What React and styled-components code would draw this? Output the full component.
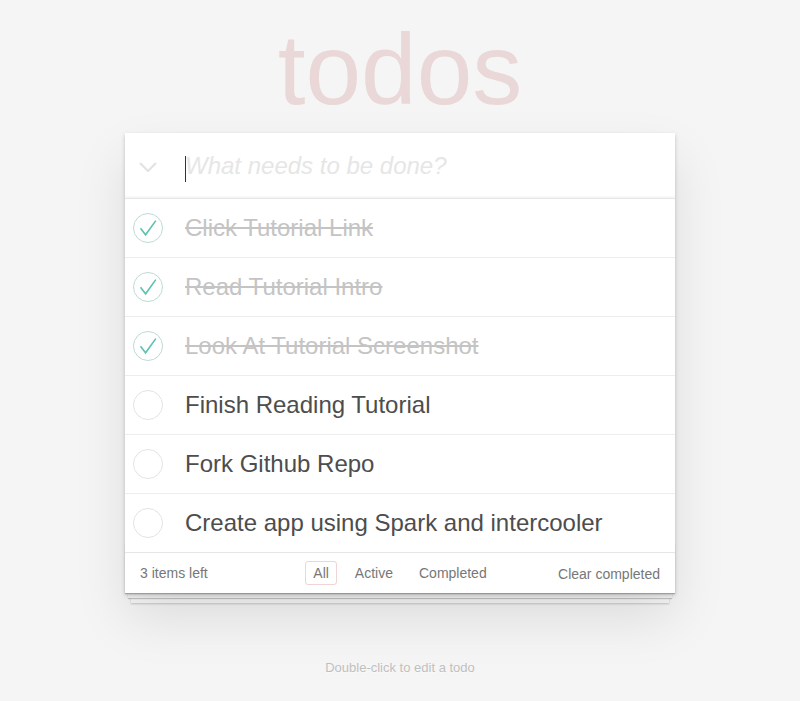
import { useState } from "react";
import styled, { createGlobalStyle } from "styled-components";

const GlobalStyle = createGlobalStyle`
  html, body {
    margin: 0;
    padding: 0;
  }
  body {
    background: #f5f5f5;
    color: #4d4d4d;
    font: 14px "Liberation Sans", Arial, Helvetica, sans-serif;
    line-height: 1.4em;
    -webkit-font-smoothing: antialiased;
  }
`;

const initialTodos = [
  { id: 1, title: "Click Tutorial Link", done: true },
  { id: 2, title: "Read Tutorial Intro", done: true },
  { id: 3, title: "Look At Tutorial Screenshot", done: true },
  { id: 4, title: "Finish Reading Tutorial", done: false },
  { id: 5, title: "Fork Github Repo", done: false },
  { id: 6, title: "Create app using Spark and intercooler", done: false },
];

const CheckCircle = ({ done }) => (
  <svg width="30" height="30" viewBox="0 0 30 30">
    <circle
      cx="15"
      cy="15"
      r="14.5"
      fill="none"
      stroke={done ? "#bddad5" : "#e3e3e3"}
      strokeWidth="1"
    />
    {done && (
      <path
        d="M7.5 15.2 L12.6 21.8 L22.8 7.6"
        fill="none"
        stroke="#5dc2af"
        strokeWidth="1.6"
      />
    )}
  </svg>
);

const App = () => {
  const [todos, setTodos] = useState(initialTodos);
  const left = todos.filter((t) => !t.done).length;

  const toggle = (id) =>
    setTodos(todos.map((t) => (t.id === id ? { ...t, done: !t.done } : t)));

  return (
    <>
      <GlobalStyle />
      <Page>
        <Title>todos</Title>
        <TodoApp>
          <Header>
            <ToggleAll>
              <svg width="18" height="10" viewBox="0 0 18 10">
                <path d="M1 1 L9 9 L17 1" fill="none" stroke="#e3e3e3" strokeWidth="2.2" />
              </svg>
            </ToggleAll>
            <InputWrap>
              <Caret />
              <NewTodo placeholder="What needs to be done?" />
            </InputWrap>
          </Header>
          <List>
            {todos.map((t) => (
              <Item key={t.id}>
                <Toggle onClick={() => toggle(t.id)}>
                  <CheckCircle done={t.done} />
                </Toggle>
                <Label $done={t.done}>{t.title}</Label>
              </Item>
            ))}
          </List>
          <Footer>
            <Count>{left} items left</Count>
            <Filters>
              <FilterLink $selected>All</FilterLink>
              <FilterLink>Active</FilterLink>
              <FilterLink>Completed</FilterLink>
            </Filters>
            <ClearCompleted>Clear completed</ClearCompleted>
          </Footer>
        </TodoApp>
        <Info>Double-click to edit a todo</Info>
      </Page>
    </>
  );
};

export default App;

const Page = styled.div`
  max-width: 550px;
  min-width: 230px;
  margin: 0 auto;
  padding-top: 19px;
`;

const Title = styled.h1`
  margin: 0;
  height: 100px;
  font-size: 100px;
  line-height: 100px;
  font-weight: 100;
  text-align: center;
  color: rgba(175, 47, 47, 0.15);
`;

const TodoApp = styled.section`
  position: relative;
  margin-top: 14px;
  background: #fff;
  box-shadow: 0 2px 4px 0 rgba(0, 0, 0, 0.2), 0 25px 50px 0 rgba(0, 0, 0, 0.1);
`;

const Header = styled.header`
  display: flex;
  align-items: center;
  height: 65px;
  box-shadow: inset 0 -2px 1px rgba(0, 0, 0, 0.03);
  border-bottom: 1px solid #e6e6e6;
`;

const ToggleAll = styled.div`
  width: 60px;
  display: flex;
  justify-content: flex-start;
  padding-left: 14px;
  padding-top: 2px;
  box-sizing: border-box;
`;

const InputWrap = styled.div`
  position: relative;
  flex: 1;
`;

const Caret = styled.span`
  position: absolute;
  left: 0;
  top: 7px;
  width: 1px;
  height: 26px;
  background: #333;
`;

const NewTodo = styled.input`
  width: 100%;
  box-sizing: border-box;
  border: none;
  outline: none;
  background: transparent;
  padding: 0 16px 0 0;
  font-family: "Liberation Sans", Arial, Helvetica, sans-serif;
  font-size: 24px;
  line-height: 1.4em;
  color: #4d4d4d;
  &::placeholder {
    font-style: italic;
    font-weight: 300;
    color: #e6e6e6;
  }
`;

const List = styled.ul`
  margin: 0;
  padding: 0;
  list-style: none;
`;

const Item = styled.li`
  display: flex;
  align-items: center;
  height: 58px;
  border-bottom: 1px solid #ededed;
  font-size: 24px;
  &:last-child {
    border-bottom: none;
  }
`;

const Toggle = styled.div`
  display: flex;
  margin-left: 8px;
  width: 30px;
  height: 30px;
  cursor: pointer;
`;

const Label = styled.label`
  padding-left: 22px;
  line-height: 1.2;
  color: ${(p) => (p.$done ? "#c4c4c4" : "#4d4d4d")};
  text-decoration: ${(p) => (p.$done ? "line-through" : "none")};
`;

const Footer = styled.footer`
  position: relative;
  display: grid;
  grid-template-columns: 1fr auto 1fr;
  align-items: center;
  height: 20px;
  padding: 10px 15px;
  color: #777;
  line-height: 20px;
  border-top: 1px solid #e6e6e6;

  &::before {
    content: "";
    position: absolute;
    right: 0;
    bottom: 0;
    left: 0;
    height: 50px;
    overflow: hidden;
    z-index: -1;
    box-shadow: 0 1px 1px rgba(0, 0, 0, 0.2), 0 8px 0 -3px #f6f6f6,
      0 9px 1px -3px rgba(0, 0, 0, 0.2), 0 16px 0 -6px #f6f6f6,
      0 17px 2px -6px rgba(0, 0, 0, 0.2);
  }
`;

const Count = styled.span`
  text-align: left;
`;

const Filters = styled.div`
  display: flex;
  align-items: center;
  height: 20px;
  gap: 4px;
`;

const FilterLink = styled.a`
  margin: 0 3px;
  padding: 2px 7px 1px;
  line-height: 19px;
  border: 1px solid
    ${(p) => (p.$selected ? "rgba(175, 47, 47, 0.2)" : "transparent")};
  border-radius: 3px;
  color: inherit;
  cursor: pointer;
`;

const ClearCompleted = styled.span`
  justify-self: end;
  position: relative;
  top: 1px;
  cursor: pointer;
`;

const Info = styled.footer`
  margin: 65px auto 0;
  color: #bfbfbf;
  font-size: 13px;
  text-shadow: 0 1px 0 rgba(255, 255, 255, 0.5);
  text-align: center;
`;
